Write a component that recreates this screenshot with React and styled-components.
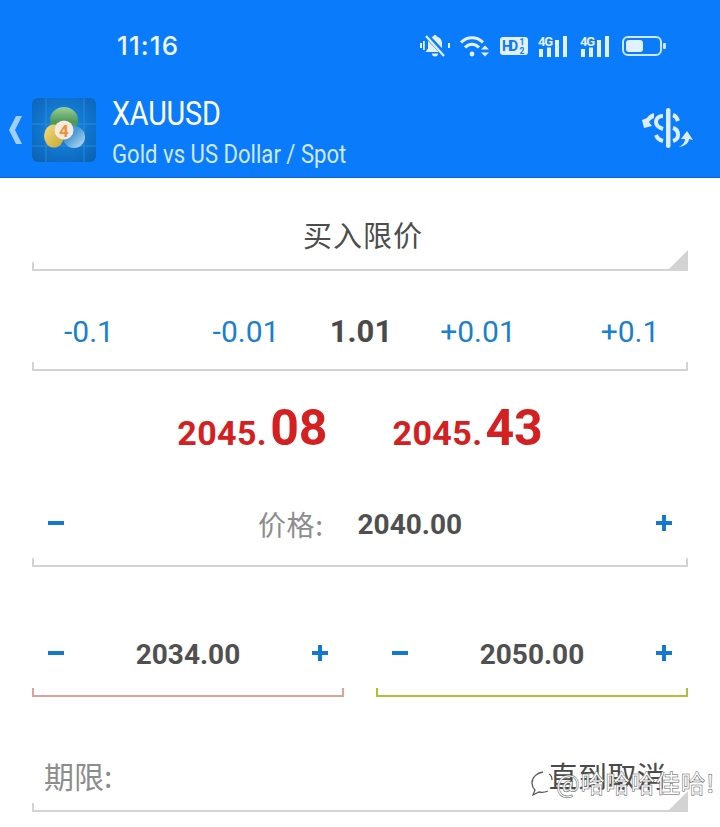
import React from "react";
import styled, { createGlobalStyle } from "styled-components";

const Global = createGlobalStyle`
  html, body { margin: 0; padding: 0; background: #fff; }
  body { font-family: Roboto, "Noto Sans CJK SC", sans-serif; }
`;
const Page = styled.div`
  position: relative; width: 720px; height: 827px; overflow: hidden; background: #fff;
`;
const Top = styled.header`
  background: #0a7bfb; height: 178px; box-sizing: border-box; border-bottom: 1px solid #0a68d0;
  display: flex; flex-direction: column; color: #fff;
`;
const StatusBar = styled.div`
  height: 78px; display: flex; align-items: center; padding: 13px 54px 0 117px; box-sizing: border-box;
  justify-content: space-between; color: #e8f3ff;
`;
const Clock = styled.span`font: 500 26px Inter, Roboto, sans-serif; letter-spacing: 1.1px; color: #eef6ff;`;
const StatusIcons = styled.div`display: flex; align-items: center; gap: 10px; svg { overflow: visible; }`;
const AppBar = styled.div`
  flex: 1; display: flex; align-items: center; padding: 4px 26px 0 8px;
`;
const Titles = styled.div`
  display: flex; flex-direction: column; margin: 5px 0 0 16px; flex: 1; gap: 6px;
`;
const Symbol = styled.div`font: 400 33px/38px Roboto, sans-serif; color: #fff; letter-spacing: -0.2px; transform: scaleX(.87); transform-origin: left;`;
const Sub = styled.div`font: 400 26px/30px Roboto, sans-serif; color: #cfeaff; transform: scaleX(.85); transform-origin: left; white-space: nowrap;`;
const ChevronIcon = styled.svg`flex: none; fill: #9fcfff;`;
const LogoIcon = styled.svg`flex: none; margin-left: 8px;`;
const SwapIcon = styled.svg`flex: none; margin-top: -3px;`;
const Form = styled.main`padding: 0 32px; display: flex; flex-direction: column;`;
const Field = styled.section`
  position: relative; height: ${p => p.$h}px; display: flex; flex-direction: column; justify-content: flex-end; flex: ${p => p.$grow ? 1 : "none"};
`;
const Content = styled.div`
  flex: 1; display: flex; align-items: center; justify-content: ${p => p.$j || "space-between"}; padding: ${p => p.$pad || "0"};
`;
const Bracket = styled.div`
  height: 9px; box-sizing: border-box; border: 2px solid ${p => p.$c || "#d3d3d3"}; border-top: none;
`;
const Corner = styled.div`
  position: absolute; right: 0; bottom: 0; width: 0; height: 0;
  border-style: solid; border-width: 0 0 21px 21px; border-color: transparent transparent #d3d3d3 transparent;
`;
const OrderType = styled.div`font: 400 29px "Noto Sans CJK SC", sans-serif; color: #4d4d4d; letter-spacing: 1px; width: 100%; text-align: center; margin-top: 28px; padding-left: 6px;`;
const Step = styled.span`font: 400 30px Roboto, sans-serif; color: #1a7fd1; text-align: center; flex: none; width: ${p => p.$w}px; margin-left: ${p => p.$ml || 0}px;`;
const Volume = styled.span`font: 700 31px Roboto, sans-serif; color: #4a4a4a; text-align: center; flex: none; width: 90px; margin-left: 25px;`;
const Prices = styled.div`
  height: 113px; display: flex; align-items: baseline; justify-content: center; gap: 65px; padding-top: 28px; box-sizing: border-box;
`;
const Price = styled.div`color: #d42020; font: 700 34px Roboto, sans-serif; letter-spacing: .4px;`;
const Big = styled.span`font-size: 50px; letter-spacing: 0; margin-left: 3px;`;
const Btn = styled.svg`display: block; width: 18px; height: 18px; flex: none; fill: #1478d0; margin-bottom: 3px;`;
const Label = styled.span`font: 400 28px "Noto Sans CJK SC", sans-serif; color: #8d8d8d; letter-spacing: .6px;`;
const Value = styled.span`font: 700 28px Roboto, sans-serif; color: #505050;`;
const PriceCenter = styled.div`display: flex; align-items: center; gap: 34px;`;
const Pair = styled.div`display: flex; gap: 32px;`;
const Expiry = styled.div`
  flex: 1; display: flex; align-items: center; justify-content: space-between; padding: 50px 22px 0 12px;
`;
const ExpiryLabel = styled.span`font: 400 30px "Noto Sans CJK SC", sans-serif; color: #8d8d8d;`;
const ExpiryValue = styled.span`font: 400 29px "Noto Sans CJK SC", sans-serif; color: #4a4a4a; letter-spacing: .3px;`;
const Watermark = styled.div`
  position: absolute; left: 530px; top: 765px; display: flex; align-items: center; gap: 2px; opacity: .97;
  font: 500 24.5px "Noto Sans CJK SC", sans-serif; color: #fff; white-space: nowrap;
  -webkit-text-stroke: .5px #555; letter-spacing: .6px;
`;

const Minus = () => <Btn viewBox="0 0 18 18"><rect x="1" y="7" width="16" height="4" /></Btn>;
const Plus = () => <Btn viewBox="0 0 18 18"><path d="M7 1h4v6h6v4h-6v6H7v-6H1V7h6z" /></Btn>;

const Bell = () => (
  <svg width="30" height="22" viewBox="0 0 30 22" fill="#e3f0ff">
    <path d="M15 0c1 0 1.600.6 1.700 1.500 3 .8 5.300 3.200 5.300 6.500v5.500l2.500 3.500H5.500L8 13.500V8c0-3.300 2.300-5.700 5.300-6.500C13.400.6 14 0 15 0z" />
    <path d="M12 18.500h6a3 3 0 0 1-6 0z" />
    <path d="M6 0l19 20" stroke="#0a7bfb" strokeWidth="5" />
    <path d="M6 1l18 20" stroke="#e3f0ff" strokeWidth="2.200" />
    <path d="M0 8h2v5H0zM28 8h2v5h-2zM3 6h1.800v9H3z" />
  </svg>
);
const Wifi = () => (
  <svg width="30" height="22" viewBox="0 0 30 22" fill="none" stroke="#e3f0ff" strokeWidth="3">
    <path d="M1 7.500C7 1 17 1 23 7.500" />
    <path d="M5 12.500C9 8 15 8 19 12.500" />
    <circle cx="12" cy="19" r="2.400" fill="#e3f0ff" stroke="none" />
    <path d="M21 14.500l4-4 4 4zM21 17.500l4 4 4-4z" fill="#e3f0ff" stroke="none" />
  </svg>
);
const Hd = () => (
  <svg width="28" height="18" viewBox="0 0 28 18">
    <rect width="28" height="18" rx="3" fill="#e3f0ff" />
    <text x="2" y="14" fontFamily="Roboto, sans-serif" fontWeight="700" fontSize="14" fill="#0a7bfb" textLength="16">HD</text>
    <text x="19.500" y="8" fontFamily="Roboto, sans-serif" fontWeight="700" fontSize="8.500" fill="#0a7bfb">1</text>
    <text x="19.500" y="16.500" fontFamily="Roboto, sans-serif" fontWeight="700" fontSize="8.500" fill="#0a7bfb">2</text>
  </svg>
);
const Signal = () => (
  <svg width="32" height="22" viewBox="0 0 32 22" fill="#e3f0ff">
    <text x="0" y="11" fontFamily="Roboto, sans-serif" fontWeight="700" fontSize="13" textLength="15">4G</text>
    <rect x="1" y="14" width="4" height="8" />
    <rect x="9" y="12.500" width="4" height="9.500" />
    <rect x="17" y="5" width="4" height="17" />
    <rect x="25" y="1" width="4" height="21" />
  </svg>
);
const Battery = () => (
  <svg width="44" height="20" viewBox="0 0 44 20">
    <rect x="1" y="1" width="38" height="18" rx="5" fill="none" stroke="#cfe6ff" strokeWidth="2" />
    <rect x="4" y="4" width="17" height="12" rx="3" fill="#e3f0ff" />
    <rect x="41" y="7" width="3" height="6" rx="1" fill="#cfe6ff" />
  </svg>
);
const Chevron = () => (
  <ChevronIcon width="16" height="28" viewBox="0 0 16 28">
    <path d="M8 0h6L7 14l7 14H8L1 14z" />
  </ChevronIcon>
);
const Logo = () => (
  <LogoIcon width="64" height="64" viewBox="0 0 64 64">
    <defs>
      <radialGradient id="logoBg" cx="50%" cy="45%" r="70%">
        <stop offset="0" stopColor="#1a8cec" />
        <stop offset="1" stopColor="#0a62b4" />
      </radialGradient>
      <linearGradient id="logoGreen" x1="0" y1="0" x2="0" y2="1">
        <stop offset="0" stopColor="#9ccf9a" />
        <stop offset=".55" stopColor="#4f9a5c" />
      </linearGradient>
      <linearGradient id="logoGold" x1="0" y1="0" x2="1" y2="1">
        <stop offset="0" stopColor="#f0dd80" />
        <stop offset="1" stopColor="#c9a52f" />
      </linearGradient>
      <linearGradient id="logoBlue" x1="1" y1="1" x2="0" y2="0">
        <stop offset="0" stopColor="#c4e2f3" />
        <stop offset=".6" stopColor="#4a9bd4" />
      </linearGradient>
    </defs>
    <rect width="64" height="64" rx="6" fill="url(#logoBg)" />
    <path d="M0 26h64M0 48h64M14 0v64M52 0v64" stroke="#3a9be6" strokeWidth="1" opacity=".6" />
    <ellipse cx="32" cy="22" rx="14" ry="13" fill="url(#logoGreen)" />
    <ellipse cx="22" cy="38" rx="10" ry="11.500" fill="url(#logoGold)" />
    <ellipse cx="42" cy="39" rx="11" ry="11" fill="url(#logoBlue)" />
    <circle cx="32" cy="32" r="9.500" fill="#f8e9dc" />
    <text x="32" y="38.500" textAnchor="middle" fontFamily="Roboto, sans-serif" fontWeight="700" fontSize="17" fill="#e8913f">4</text>
  </LogoIcon>
);
const Swap = () => (
  <SwapIcon width="54" height="40" viewBox="0 0 54 40" fill="#dcedff">
    <rect x="26" y="0" width="4.500" height="40" rx="2" />
    <g fill="none" stroke="#dcedff" strokeWidth="4">
      <path d="M23 8C18 8 16 11 16 14c0 4 4 6 7 7" />
      <path d="M33 7c3 1 4 3 5 6" />
      <path d="M33 20c4 1 5 4 5 7s-2 5-5 6" />
      <path d="M16 27c1 3 3 5 7 6" />
    </g>
    <path d="M14 5c-4 1-6 3-7 5l-5 2 2 8 8-2-3-4c1-2 3-3 5-4z" />
    <path d="M39 39c4-2 6-5 6-8h-4l6-8 6 9-4-1c0 4-4 7-10 8z" />
  </SwapIcon>
);

export default function App() {
  return (
    <Page>
      <Global />
      <Top>
        <StatusBar>
          <Clock>11:16</Clock>
          <StatusIcons>
            <Bell /><Wifi /><Hd /><Signal /><Signal /><Battery />
          </StatusIcons>
        </StatusBar>
        <AppBar>
          <Chevron />
          <Logo />
          <Titles>
            <Symbol>XAUUSD</Symbol>
            <Sub>Gold vs US Dollar / Spot</Sub>
          </Titles>
          <Swap />
        </AppBar>
      </Top>
      <Form>
        <Field $h={93}>
          <Content $j="center"><OrderType>买入限价</OrderType></Content>
          <Bracket />
          <Corner />
        </Field>
        <Field $h={100}>
          <Content $j="flex-start" $pad="30px 0 0 1px">
            <Step $w={112}>-0.1</Step>
            <Step $w={90} $ml={56}>-0.01</Step>
            <Volume>1.01</Volume>
            <Step $w={100} $ml={22}>+0.01</Step>
            <Step $w={100} $ml={52}>+0.1</Step>
          </Content>
          <Bracket />
        </Field>
        <Prices>
          <Price>2045.<Big>08</Big></Price>
          <Price>2045.<Big>43</Big></Price>
        </Prices>
        <Field $h={83}>
          <Content $pad="6px 15px 0 15px">
            <Minus />
            <PriceCenter><Label>价格:</Label><Value>2040.00</Value></PriceCenter>
            <Plus />
          </Content>
          <Bracket />
        </Field>
        <Pair>
          <Field $h={130} $grow>
            <Content $pad="54px 15px 0 15px"><Minus /><Value>2034.00</Value><Plus /></Content>
            <Bracket $c="#dfa29b" />
          </Field>
          <Field $h={130} $grow>
            <Content $pad="54px 15px 0 15px"><Minus /><Value>2050.00</Value><Plus /></Content>
            <Bracket $c="#a9c236" />
          </Field>
        </Pair>
        <Field $h={115}>
          <Expiry><ExpiryLabel>期限:</ExpiryLabel><ExpiryValue>直到取消</ExpiryValue></Expiry>
          <Bracket />
          <Corner />
        </Field>
      </Form>
      <Watermark>
        <svg width="24" height="28" viewBox="0 0 24 28" fill="none" stroke="#555" strokeWidth="1.300">
          <path d="M13 3C7 4 2 8 2 14c0 3 1 5 3 7l-2 5 6-3c3 .7 6 .3 9-1" />
          <path d="M19 5c2 1 3 3 3 6" />
        </svg>
        @哈哈哈佳哈!
      </Watermark>
    </Page>
  );
}
